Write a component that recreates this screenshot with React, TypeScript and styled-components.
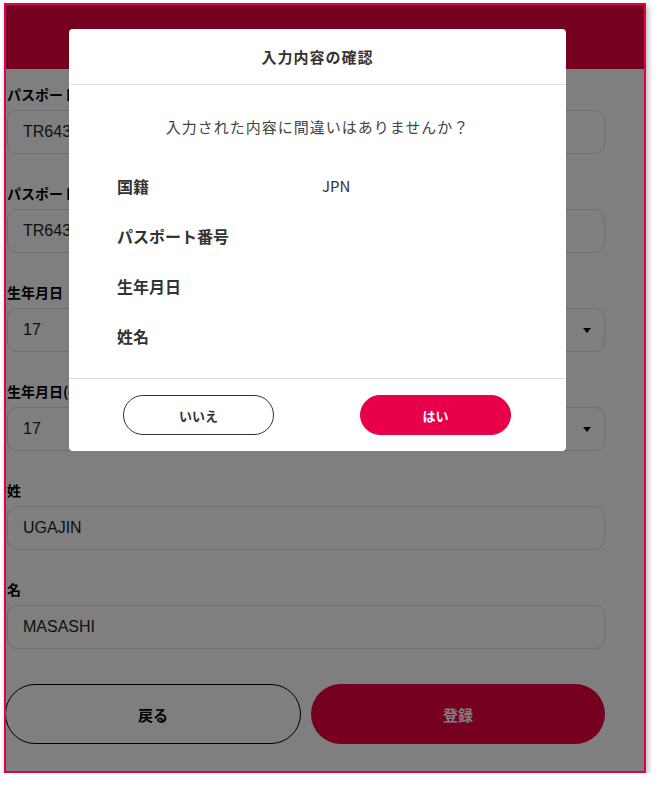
import React from 'react'
import styled, { createGlobalStyle } from 'styled-components'

const GlobalStyle = createGlobalStyle`
  * { box-sizing: border-box; }
  body {
    margin: 0;
    background: #fff;
    font-family: "Noto Sans CJK JP", "Noto Sans", sans-serif;
    color: #333;
  }
`;

const fields = [
  { label: 'パスポート番号', value: 'TR6431587', select: false },
  { label: 'パスポート番号', value: 'TR6431587', select: false },
  { label: '生年月日', value: '17', select: true },
  { label: '生年月日(確認)', value: '17', select: true },
  { label: '姓', value: 'UGAJIN', select: false },
  { label: '名', value: 'MASASHI', select: false },
];

const rows = [
  { label: '国籍', value: 'JPN' },
  { label: 'パスポート番号', value: '' },
  { label: '生年月日', value: '' },
  { label: '姓名', value: '' },
];

const App = () => {
  return (
    <>
      <GlobalStyle />
      <Frame>
        <Header />
        <Form>
          {fields.map((f, i) => (
            <Field key={i}>
              <Label>{f.label}</Label>
              <InputBox>
                <span>{f.value}</span>
                {f.select && <Arrow />}
              </InputBox>
            </Field>
          ))}
          <Actions>
            <OutlineButton>戻る</OutlineButton>
            <FillButton>登録</FillButton>
          </Actions>
        </Form>

        <Overlay>
          <Modal>
            <ModalTitle>入力内容の確認</ModalTitle>
            <ModalBody>
              <Message>入力された内容に間違いはありませんか？</Message>
              <Rows>
                {rows.map((r, i) => (
                  <Row key={i}>
                    <RowLabel>{r.label}</RowLabel>
                    <RowValue>{r.value}</RowValue>
                  </Row>
                ))}
              </Rows>
            </ModalBody>
            <ModalFooter>
              <ModalButton>いいえ</ModalButton>
              <ModalButton $primary>はい</ModalButton>
            </ModalFooter>
          </Modal>
        </Overlay>
      </Frame>
    </>
  )
}

const Frame = styled.div`
  position: relative;
  margin: 3px 0 0 4px;
  width: 642px;
  height: 770px;
  border: 2px solid #e2004f;
  box-shadow: 2px 3px 6px rgba(0, 0, 0, 0.3);
  overflow: hidden;
  background: #fff;
`;

const Header = styled.header`
  height: 64px;
  background: #ec0040;
`;

const Form = styled.div`
  padding: 15px 39px 0 1px;
`;

const Field = styled.div`
  display: flex;
  flex-direction: column;
  gap: 6px;
  margin-bottom: 29px;
`;

const Label = styled.label`
  font-size: 14px;
  line-height: 20px;
  font-weight: bold;
  color: #000;
  white-space: nowrap;
`;

const InputBox = styled.div`
  display: flex;
  align-items: center;
  justify-content: space-between;
  height: 44px;
  padding: 0 13px 0 15px;
  border: 1px solid #ddd;
  border-radius: 10px;
  background: #fff;
  font-family: "Liberation Sans", "Noto Sans CJK JP", sans-serif;
  font-size: 16px;
  color: #222;
`;

const Arrow = styled.i`
  width: 0;
  height: 0;
  border-left: 4px solid transparent;
  border-right: 4px solid transparent;
  border-top: 5px solid #000;
`;

const Actions = styled.div`
  display: flex;
  gap: 10px;
  margin: 35px 0 0 -2px;
`;

const OutlineButton = styled.button`
  flex: 296px 0 0;
  height: 60px;
  border: 1px solid #000;
  border-radius: 30px;
  background: #fff;
  font-family: inherit;
  font-size: 15px;
  font-weight: bold;
  color: #000;
`;

const FillButton = styled.button`
  flex: 1;
  height: 60px;
  border: none;
  border-radius: 30px;
  background: #ec0040;
  font-family: inherit;
  font-size: 15px;
  font-weight: bold;
  color: #fff;
`;

const Overlay = styled.div`
  position: absolute;
  inset: 0;
  background: rgba(0, 0, 0, 0.5);
  padding: 24px 0 0 63px;
`;

const Modal = styled.div`
  width: 497px;
  background: #fff;
  border-radius: 4px;
  overflow: hidden;
`;

const ModalTitle = styled.h2`
  margin: 0;
  height: 56px;
  display: flex;
  align-items: center;
  justify-content: center;
  border-bottom: 1px solid #ddd;
  font-size: 15px;
  font-weight: bold;
  letter-spacing: 1px;
  color: #333;
`;

const ModalBody = styled.div`
  padding: 30px 0 30px;
  border-bottom: 1px solid #ddd;
`;

const Message = styled.p`
  margin: 0 0 35px;
  text-align: center;
  font-size: 15px;
  line-height: 24px;
  letter-spacing: 1px;
  color: #444;
`;

const Rows = styled.div`
  display: flex;
  flex-direction: column;
  gap: 26px;
`;

const Row = styled.div`
  display: grid;
  grid-template-columns: 205px 1fr;
  padding-left: 48px;
  line-height: 24px;
`;

const RowLabel = styled.span`
  font-size: 16px;
  font-weight: bold;
  color: #333;
`;

const RowValue = styled.span`
  font-size: 15px;
  color: #333;
`;

const ModalFooter = styled.div`
  display: flex;
  justify-content: space-between;
  padding: 16px 55px 16px 54px;
`;

const ModalButton = styled.button<{ $primary?: boolean }>`
  width: 151px;
  height: 40px;
  border-radius: 20px;
  border: 1px solid ${p => (p.$primary ? '#e8004a' : '#333')};
  background: ${p => (p.$primary ? '#e8004a' : '#fff')};
  color: ${p => (p.$primary ? '#fff' : '#333')};
  font-family: inherit;
  font-size: 13px;
  font-weight: bold;
`;

export default App
